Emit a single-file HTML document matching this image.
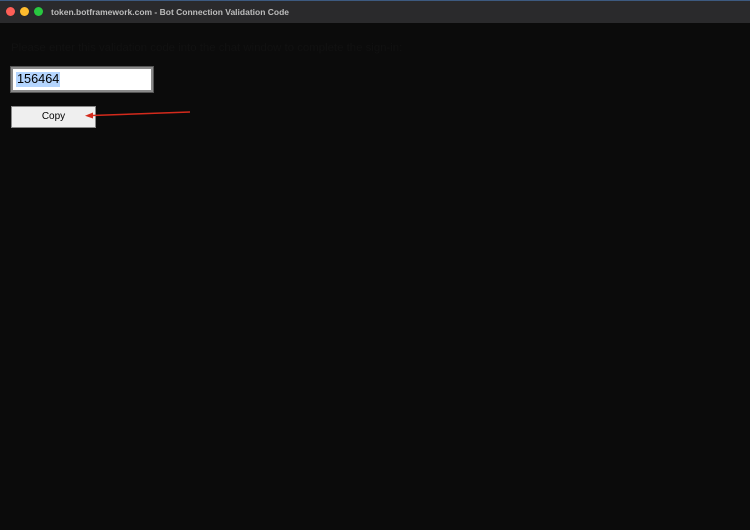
<!DOCTYPE html>
<html><head><style>
html,body{margin:0;padding:0;width:750px;height:530px;overflow:hidden;background:#0b0b0b;font-family:"Liberation Sans",sans-serif}
.bar{position:absolute;left:0;top:0;width:750px;height:23px;background:#2a2a2c;border-top:1px solid #3d5a80;box-sizing:border-box}
.dot{position:absolute;top:6px;width:9px;height:9px;border-radius:50%}
.title{position:absolute;left:51px;top:6px;font-size:8.5px;font-weight:bold;color:#bdbdbd}
.msg{position:absolute;left:11px;top:42px;font-size:11.4px;color:#111}
.inp{position:absolute;left:11px;top:67px;width:142px;height:25px;box-sizing:border-box;background:#fff;border:2px solid #8a8a8a;outline:1px solid #555}
.sel{position:absolute;left:3px;top:3px;background:#b4d5fe;color:#000;font-size:12.7px;line-height:15px;padding:0 1px}
.btn{position:absolute;left:11px;top:106px;width:85px;height:22px;box-sizing:border-box;background:#efefef;border:1px solid #888;font-size:10px;text-align:center;line-height:20px;color:#000}
</style></head><body>
<div class="bar">
<div class="dot" style="left:6px;background:#fe5f57"></div>
<div class="dot" style="left:20px;background:#febc2e"></div>
<div class="dot" style="left:34px;background:#28c840"></div>
<div class="title">token.botframework.com - Bot Connection Validation Code</div>
</div>
<div class="msg">Please enter this validation code into the chat window to complete the sign-in:</div>
<div class="inp"><span class="sel">156464</span></div>
<div class="btn">Copy</div>
<svg style="position:absolute;left:0;top:0" width="750" height="530">
<line x1="190" y1="112" x2="92" y2="115.5" stroke="#d42a1c" stroke-width="1.5"/>
<polygon points="85,115.7 93,112.5 93,118.5" fill="#d42a1c"/>
</svg>
</body></html>
